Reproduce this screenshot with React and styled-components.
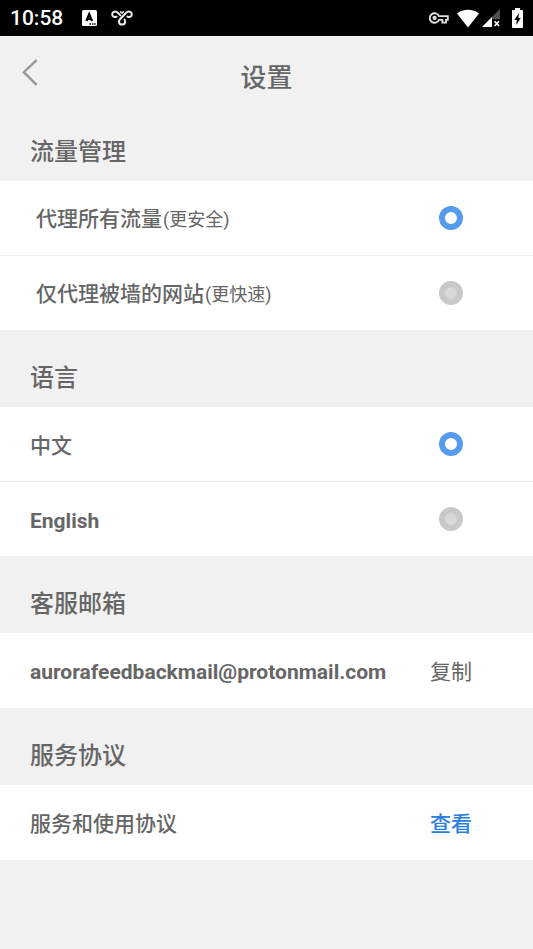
import React, { useState } from "react";
import styled, { createGlobalStyle } from "styled-components";

const MAIL = "aurorafeedbackmail@protonmail.com";

const KeyIcon = () => (
  <svg width="20" height="12" viewBox="0 0 20 12" fill="none" stroke="#ddd" strokeWidth="1.9">
    <path d="M10 4.1A4.8 4.8 0 1 0 10 7.9H13.4V10.6H17V7.9H18.8V4.1Z" />
    <circle cx="5.6" cy="6" r="1.2" />
  </svg>
);

const WifiIcon = () => (
  <svg width="22" height="19" viewBox="0 0 22 19" fill="#fff">
    <path d="M0 4.4C6-0.6 16-0.6 22 4.4L11 18.6Z" />
  </svg>
);

const SignalIcon = () => (
  <svg width="19" height="18" viewBox="0 0 19 18">
    <path d="M18 0V18H0Z" fill="#505050" />
    <path d="M10 8V18H0Z" fill="#fff" />
    <path d="M10 10H19V18H10Z" fill="#000" />
    <path d="M12.6 12.2L17 17M17 12.2L12.6 17" stroke="#fff" strokeWidth="1.7" />
  </svg>
);

const BatteryIcon = () => (
  <svg width="11" height="20" viewBox="0 0 11 20">
    <path d="M3 0H8V2H10A1 1 0 0 1 11 3V19A1 1 0 0 1 10 20H1A1 1 0 0 1 0 19V3A1 1 0 0 1 1 2H3Z" fill="#fff" />
    <path d="M7 5L2.2 12H4.8L4.2 17L8.8 10H6.4Z" fill="#000" />
  </svg>
);

const KeyboardIcon = () => (
  <svg width="15" height="16" viewBox="0 0 15 16">
    <rect width="15" height="16" rx="1.5" fill="#fff" />
    <path d="M4.4 11L7.2 4.2L10 11M5.4 9H9" fill="none" stroke="#000" strokeWidth="2.2" />
    <path d="M7.4 14H9M10 14H11.4M12.2 14H13.6" stroke="#000" strokeWidth="1.3" />
  </svg>
);

const ButterflyIcon = () => (
  <svg width="22" height="16" viewBox="0 0 22 16" fill="none" stroke="#eee" strokeWidth="2" strokeLinecap="round">
    <path d="M5.6 6.6C3.2 7.8 1.2 6.4 1.2 4.4C1.2 1.6 4.6 0.6 6.8 2.8L9.4 5.4" />
    <path d="M16.4 6.6C18.8 7.8 20.8 6.4 20.8 4.4C20.8 1.6 17.4 0.6 15.2 2.8L9 9.2C7.2 11.2 7.8 14.6 11 14.6C14.2 14.6 14.8 12 13.6 9.6" />
    <path d="M9.6 1.8L11 3.2L12.4 1.8" strokeWidth="1.6" />
  </svg>
);

const BackIcon = () => (
  <svg width="16" height="27" viewBox="0 0 16 27" fill="none" stroke="#999" strokeWidth="2.4">
    <path d="M14.6 1.2L1.8 13.2L14.6 25.8" />
  </svg>
);

const App = () => {
  const [proxyMode, setProxyMode] = useState("all");
  const [language, setLanguage] = useState("zh");

  const handleCopy = async () => {
    try {
      await navigator.clipboard.writeText(MAIL);
    } catch (e) {
      console.log(e);
    }
  };

  return (
    <>
      <GlobalStyle />
      <StatusBar>
        <Clock>10:58</Clock>
        <Notifications>
          <KeyboardIcon />
          <ButterflyIcon />
        </Notifications>
        <SystemIcons>
          <KeyIcon />
          <Network>
            <WifiIcon />
            <SignalIcon />
          </Network>
          <BatteryIcon />
        </SystemIcons>
      </StatusBar>

      <Header>
        <BackButton type="button" aria-label="返回">
          <BackIcon />
        </BackButton>
        <Title>设置</Title>
      </Header>

      <main>
        <SectionTitle>流量管理</SectionTitle>
        <List>
          <OptionRow $indent>
            <Label>
              代理所有流量<Hint>(更安全)</Hint>
            </Label>
            <Radio
              name="proxy"
              checked={proxyMode === "all"}
              onChange={() => setProxyMode("all")}
            />
          </OptionRow>
          <OptionRow $indent>
            <Label>
              仅代理被墙的网站<Hint>(更快速)</Hint>
            </Label>
            <Radio
              name="proxy"
              checked={proxyMode === "blocked"}
              onChange={() => setProxyMode("blocked")}
            />
          </OptionRow>
        </List>

        <SectionTitle>语言</SectionTitle>
        <List>
          <OptionRow>
            <Label>中文</Label>
            <Radio
              name="language"
              checked={language === "zh"}
              onChange={() => setLanguage("zh")}
            />
          </OptionRow>
          <OptionRow>
            <Label $bold>English</Label>
            <Radio
              name="language"
              checked={language === "en"}
              onChange={() => setLanguage("en")}
            />
          </OptionRow>
        </List>

        <SectionTitle>客服邮箱</SectionTitle>
        <List>
          <Row>
            <Label $bold>{MAIL}</Label>
            <CopyButton type="button" onClick={handleCopy}>
              复制
            </CopyButton>
          </Row>
        </List>

        <SectionTitle>服务协议</SectionTitle>
        <List>
          <Row>
            <Label>服务和使用协议</Label>
            <ViewLink href="#terms">查看</ViewLink>
          </Row>
        </List>
      </main>
    </>
  );
};

const GlobalStyle = createGlobalStyle`
  * {
    box-sizing: border-box;
  }

  body {
    margin: 0;
    background-color: #f1f1f1;
    color: #666;
    font-family: Roboto, "Noto Sans CJK SC", sans-serif;
  }
`;

const StatusBar = styled.div`
  display: flex;
  align-items: center;
  height: 36px;
  padding: 0 10px;
  background-color: #000;
  color: #fff;
`;

const Clock = styled.span`
  font-size: 21px;
  line-height: 24px;
  font-weight: 500;
`;

const Notifications = styled.div`
  display: flex;
  align-items: center;
  gap: 14px;
  margin-left: 19px;
`;

const SystemIcons = styled.div`
  display: flex;
  align-items: center;
  gap: 8px;
  margin-left: auto;
`;

const Network = styled.div`
  display: flex;
  align-items: center;
  gap: 3px;
  padding-right: 3px;
`;

const Header = styled.header`
  display: grid;
  grid-template-columns: 60px 1fr 60px;
  align-items: center;
  height: 68px;
  padding-top: 8px;
`;

const BackButton = styled.button`
  display: flex;
  align-items: center;
  height: 48px;
  padding: 0 22px 4px;
  border: none;
  background: none;
  cursor: pointer;
`;

const Title = styled.h1`
  margin: 0;
  padding-top: 8px;
  font-size: 26px;
  line-height: 36px;
  font-weight: 500;
  text-align: center;
`;

const SectionTitle = styled.h2`
  margin: 0;
  padding: 30px 30px 11px;
  font-size: 24px;
  line-height: 36px;
  font-weight: 500;
`;

const List = styled.div`
  background-color: #fff;
`;

const Row = styled.div`
  display: flex;
  align-items: center;
  justify-content: space-between;
  height: 75px;
  padding: 0 61px 0 30px;
`;

const OptionRow = styled(Row).attrs({ as: "label" })`
  height: 74px;
  padding-left: ${({ $indent }) => ($indent ? "36px" : "30px")};
  cursor: pointer;

  & + & {
    height: 75px;
    border-top: 1px solid #ececec;
  }
`;

const Label = styled.span`
  padding-top: 3px;
  font-size: 21px;
  line-height: 32px;
  font-weight: ${({ $bold }) => ($bold ? 700 : 500)};
  white-space: nowrap;
`;

const Hint = styled.small`
  margin-left: 1px;
  font-size: 18px;
  font-weight: 400;
`;

const Radio = styled.input.attrs({ type: "radio" })`
  appearance: none;
  width: 24px;
  height: 24px;
  margin: 0 9px;
  border: 6px solid #c8c8c8;
  border-radius: 50%;
  background-color: #d8d8d8;

  &:checked {
    border-color: #559cec;
    background-color: #fff;
  }
`;

const CopyButton = styled.button`
  padding: 3px 0 0;
  border: none;
  background: none;
  color: #666;
  font-family: inherit;
  font-size: 21px;
  line-height: 32px;
  cursor: pointer;
`;

const ViewLink = styled.a`
  padding-top: 3px;
  color: #2a7de1;
  font-size: 21px;
  line-height: 32px;
  font-weight: 500;
  text-decoration: none;
`;

export default App;
